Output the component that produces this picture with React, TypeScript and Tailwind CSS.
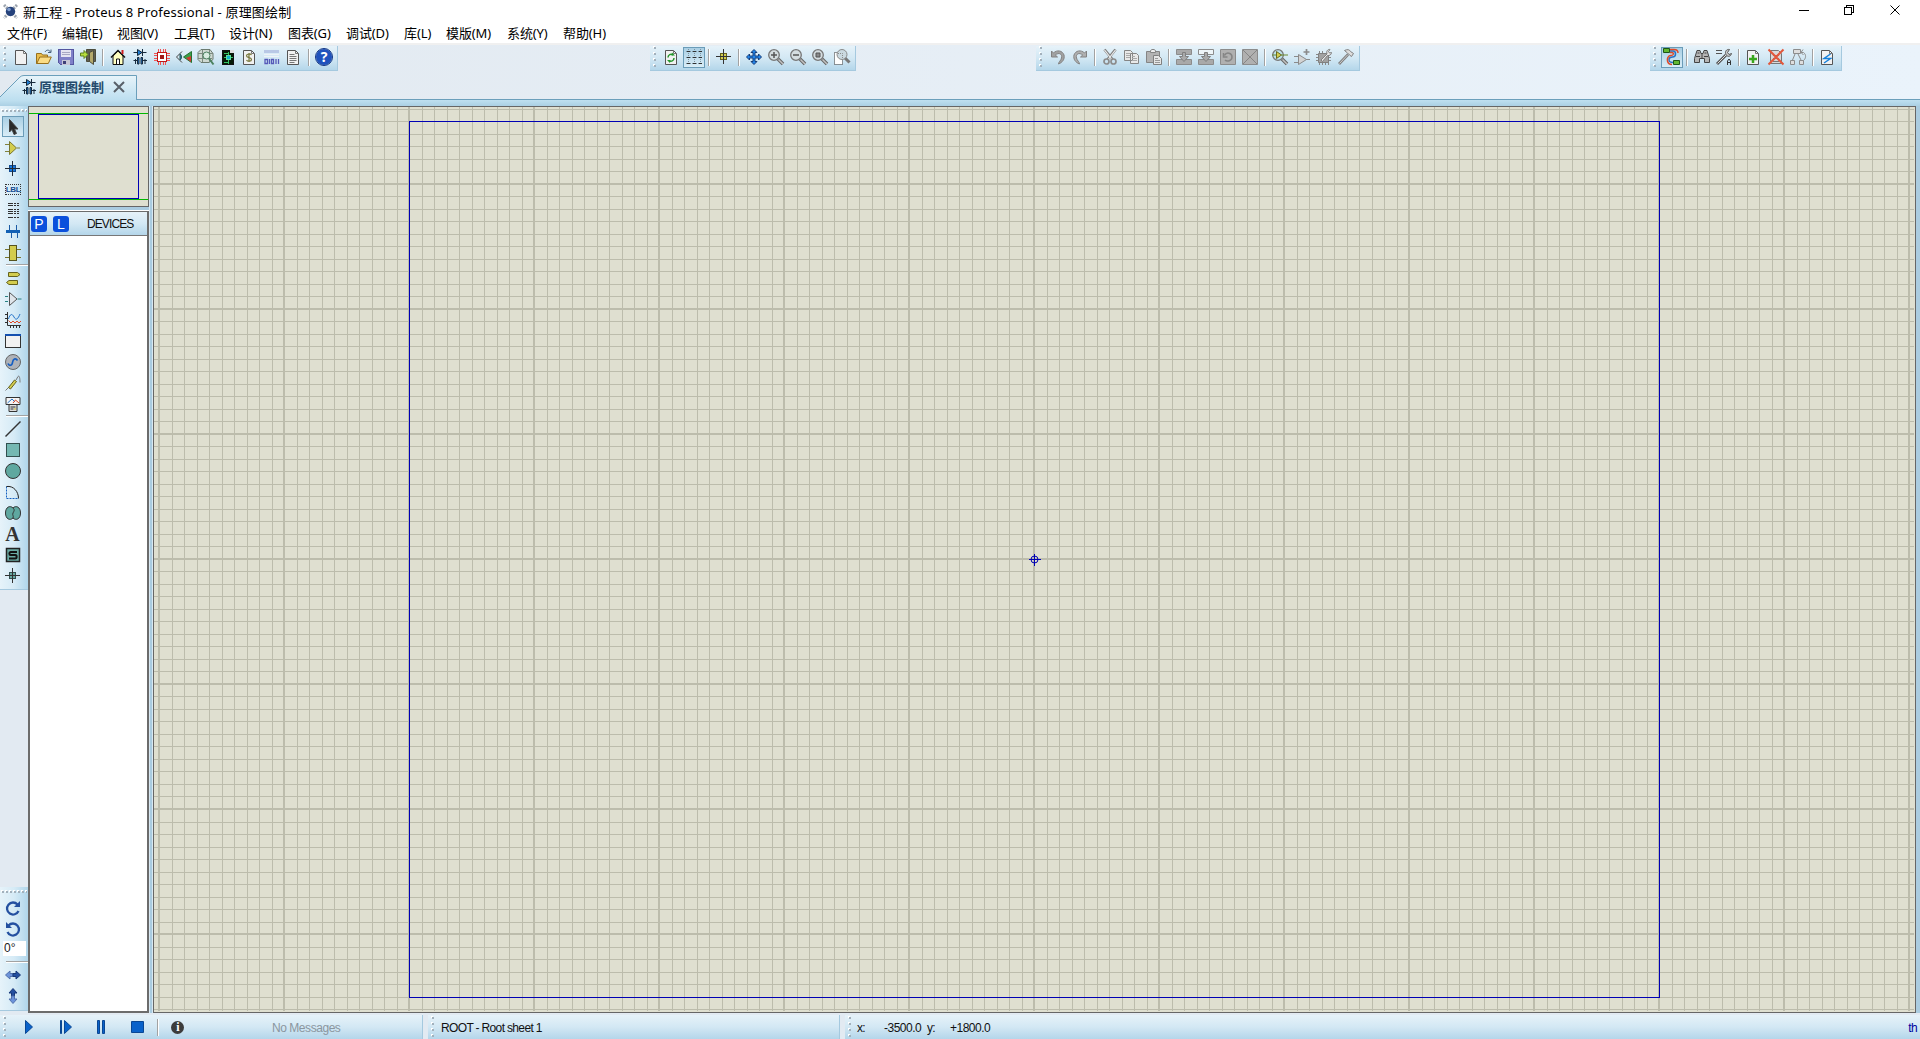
import type { ReactNode } from "react";

const INK = "#303030";
const GREY = "#8c8c8c";
const TEAL = "#5fa8a0";
const GOLD = "#d3cd4e";

function Svg({ children, crisp }: { children: ReactNode; crisp?: boolean }) {
  return (
    <svg
      className="block h-4 w-4 shrink-0 overflow-visible"
      viewBox="0 0 16 16"
      fill="none"
      stroke={INK}
      shapeRendering={crisp ? "crispEdges" : "auto"}
    >
      {children}
    </svg>
  );
}

// Blank page with a folded corner, base for all document icons
function Page({ children }: { children?: ReactNode }) {
  return (
    <Svg>
      <g transform="translate(-1 0)">
        <path d="M2.500 1.500H10.500l3 3V15.500h-11z" fill="#f1f1f1" stroke="#555" />
        <path d="M10.500 1.500v3h3" stroke="#777" />
        {children}
      </g>
    </Svg>
  );
}

function Lens({ children, glass = "#d5dde0" }: { children?: ReactNode; glass?: string }) {
  return (
    <Svg>
      <path d="M10 10l5 5" stroke="#666" strokeWidth="3.500" />
      <path d="M10.500 10.500l4.500 4.500" stroke="#c2c2c2" strokeWidth="1.500" />
      <circle cx="6" cy="6" r="5.300" fill={glass} stroke="#777" strokeWidth="1.300" />
      {children}
    </Svg>
  );
}

const fileIcons = {
  newDoc: <Page />,
  open: (
    <Svg>
      <path d="M.5 14.500v-10h5l1 1.500h5v8z" fill="#e9bd4d" stroke="#98701c" />
      <path d="M.8 14.500l3-6.500h11.500l-3 6.500z" fill="#fbdc84" stroke="#98701c" />
      <path d="M9 3c1.500-2.500 4-2.500 5.500 0M15 .500v3h-3" stroke="#46607c" />
    </Svg>
  ),
  save: (
    <Svg crisp>
      <path d="M.5 .5h15v15h-13l-2-2z" fill="#7f80c8" stroke="#5556a0" />
      <path d="M3 1h10v7H3z" fill="#e4e4f2" stroke="none" />
      <path d="M4 3.500h8M4 5.500h8" stroke="#a7a7c4" />
      <path d="M4 11h8v5H4z" fill="#c7c7d6" stroke="none" />
      <path d="M5 12h3v3H5z" fill="#3e3f78" stroke="none" />
    </Svg>
  ),
  exit: (
    <Svg>
      <path d="M6.500 .5h9v12h-9z" fill="#5f5f50" stroke="#4d4d3c" />
      <path d="M9.500 3.500l4-2v14l-4-3z" fill="#b4a96c" stroke="#4d4d3c" />
      <path d="M.5 4h3.500V1.500L8 5.500 4 9.500V7H.5z" fill="#b7dd3c" stroke="#5c8020" />
    </Svg>
  ),
};

const moduleIcons = {
  home: (
    <Svg>
      <path d="M3 7l5-5 5 5v8.500H3z" fill="#ffffc0" stroke="#111" />
      <path d="M1 8.500l7-7 7 7" stroke="#111" strokeWidth="1.500" />
      <path d="M12.500 1v4" stroke="#d02020" strokeWidth="2" />
      <path d="M6.500 15v-5h3v5" fill="#fff" stroke="#111" />
    </Svg>
  ),
  schematic: (
    <Svg>
      <path d="M1.500 3.500h13M1.500 11.500h4M10.500 11.500h4.500" stroke="#16293b" />
      <path d="M5.500 .5l4.500 3-4.500 3z" fill="#2080d8" stroke="#16293b" />
      <path d="M10.500 0v7M3.500 10v5M13 10v5" stroke="#16293b" />
      <path d="M5.500 8.500h1.500v6.500H5.500zM9 8.500h1.500v6.500H9z" fill="#2080d8" stroke="#16293b" />
    </Svg>
  ),
  pcb: (
    <Svg crisp>
      <path d="M4.500 0v16M6.500 0v16M9.500 0v16M11.500 0v16M0 4.500h16M0 6.500h16M0 9.500h16M0 11.500h16" stroke="#ef5353" />
      <path d="M3.500 3.500h9v9h-9z" fill="#fff" stroke="#c01818" />
      <path d="M6 6h4v4H6z" fill="#a01818" stroke="none" />
    </Svg>
  ),
  viewer: (
    <Svg>
      <path d="M6 2.500L.5 8 6 13.500" stroke="#444" />
      <path d="M4 5c2 1 2 5 0 6z" fill="#2f87b5" stroke="#255" />
      <path d="M15.500 2.500v11L7.500 8z" fill="#39a04a" stroke="#257030" />
      <path d="M15 7v6l-5-4z" fill="#d13c33" stroke="none" />
    </Svg>
  ),
  gerber: (
    <Svg>
      <path d="M3 .5h9l3 4v6l-4 3H3l-3-3v-7z" fill="#cfd9d2" stroke="#6c7b70" />
      <path d="M0 4.500h15M0 9.500h14M4.500 1v12M11.500 1v12" stroke="#7c8b80" />
      <circle cx="8.500" cy="6.500" r="3.500" fill="#d9ece0" stroke="#4c8260" />
      <path d="M11 9.500l4.500 6" stroke="#4c8260" strokeWidth="2" />
    </Svg>
  ),
  design: (
    <Svg crisp>
      <path d="M2.500 1.500h8l3 3v11h-11z" fill="#061a06" stroke="#111" />
      <path d="M8.500 3v12M4 8.500h9M4 4.500h4M4 13.500h5" stroke="#35c565" />
      <path d="M6.500 6.500h4v4h-4z" fill="#14b4ca" stroke="#58e0a0" />
      <path d="M10 1h4v3h-4z" fill="#ddd" stroke="none" />
    </Svg>
  ),
  cost: (
    <Page>
      <path d="M10.500 6c-1-1.500-5-1.500-5 .8s5 1.500 5 3.700-4 2.200-5 .5M8 4v9" stroke="#78783c" strokeWidth="1.200" />
    </Page>
  ),
  binary: (
    <Svg>
      <path d="M0 1h15v3H0z" fill="#b9c8e6" stroke="none" />
      <path d="M0 5.500h15M0 7.500h15" stroke="#eef2f8" />
      <path d="M1 10.500h2.500v4H1zM5.500 10v5M7.500 10.500h2v4h-2zM12 10v5M14.500 10v5" stroke="#5559b8" strokeWidth="1.300" />
    </Svg>
  ),
  notes: (
    <Page>
      <path d="M4.500 5.500h5M4.500 7.500h7M4.500 9.500h7M4.500 11.500h7M4.500 13.500h5" stroke="#777" />
    </Page>
  ),
};

const help = (
  <span className="flex h-4 w-4 items-center justify-center rounded-full bg-[#1f52bd] text-[14px] leading-none font-bold text-white outline-1 outline-[#0d3182]">
    ?
  </span>
);

const viewIcons = {
  refresh: (
    <Page>
      <path d="M5 8.500c0-3 3-4 5-2.500M11 9c0 3-3 4-5 2.500" stroke="#24962c" strokeWidth="1.500" />
      <path d="M9 3.500l3 3H8.500zM7 14L4 11h3.500z" fill="#24962c" stroke="none" />
    </Page>
  ),
  grid: (
    <Svg crisp>
      <path d="M0 2.500h16M0 8.500h16M0 14.500h16M2.500 0v16M8.500 0v16M14.500 0v16" strokeDasharray="1 1" stroke="#7d93a0" />
      <path d="M1 2.500h3M7 2.500h3M13 2.500h3M1 8.500h3M7 8.500h3M13 8.500h3M1 14.500h3M7 14.500h3M13 14.500h3" />
    </Svg>
  ),
  origin: (
    <Svg crisp>
      <path d="M4.500 4.500h6v6h-6z" fill={GOLD} stroke="#65621c" />
      <path d="M7.500 0v15M0 7.500h15" stroke="#333" />
    </Svg>
  ),
  pan: (
    <Svg>
      <path d="M8 .5L11 3.500H9v3.500h3.500V5l3 3-3 3V9H9v3.500h2L8 15.500 5 12.500h2V9H3.500v2L.5 8l3-3v2H7V3.500H5z" fill="#2286ec" stroke="#173d78" />
    </Svg>
  ),
  zoomIn: (
    <Lens>
      <path d="M3 6h6M6 3v6" strokeWidth="1.500" stroke="#555" />
    </Lens>
  ),
  zoomOut: (
    <Lens>
      <path d="M3 6h6" strokeWidth="1.500" stroke="#555" />
    </Lens>
  ),
  zoomAll: (
    <Lens>
      <path d="M4 4h4v4H4z" fill="#888" stroke="#555" />
    </Lens>
  ),
  zoomArea: (
    <Svg>
      <path d="M.5 3.500h8v12h-8z" fill="#fff" strokeDasharray="1 1" />
      <path d="M11 9l4.500 4.500" stroke="#777" strokeWidth="3" />
      <circle cx="8" cy="5.500" r="5" fill="#cad9e0" stroke="#8a8a8a" />
      <path d="M4 4.500h4.500v5" strokeDasharray="1 1" stroke="#8a8a8a" />
    </Svg>
  ),
};

const undoPath = "M1.500 2v6h6L5.300 6C9 3 12.500 5 11.500 9c-.5 2.500-3 4-3 6 4-1.500 6.500-5 5.500-9C12.500 1.500 7 .5 3.500 4z";

function Block({ top }: { top?: string }) {
  return (
    <Svg>
      <path d="M.5 .5h15v5H.5z" fill={top ?? "#a9a9a9"} stroke={GREY} />
      <path d="M.5 10.500h15v5H.5z" fill="#a9a9a9" stroke={GREY} />
      <path d="M6.500 3.500h3v4h3L8 12.500 3.500 7.500h3z" fill="#aaa" stroke="#808080" />
    </Svg>
  );
}

const editIcons = {
  undo: (
    <Svg>
      <path d={undoPath} fill="#a2a2a2" stroke="#828282" />
    </Svg>
  ),
  redo: (
    <Svg>
      <path d={undoPath} fill="#b0b0b0" stroke="#828282" transform="matrix(-1 0 0 1 16 0)" />
    </Svg>
  ),
  cut: (
    <Svg>
      <path d="M2.500 .5l8 10M13.500 .5l-8 10" stroke="#808080" strokeWidth="2.800" />
      <path d="M2.500 1l7 9M13.500 1l-7 9" stroke="#ececec" strokeWidth="1.200" />
      <circle cx="4.500" cy="12.500" r="2.500" stroke={GREY} strokeWidth="1.700" />
      <circle cx="11.500" cy="12.500" r="2.500" stroke={GREY} strokeWidth="1.700" />
    </Svg>
  ),
  copy: (
    <Svg>
      <path d="M.5 1.500h6l2 2v8h-8zM6.500 4.500h6l2 2v8h-8z" fill="#e9e9e9" stroke="#858585" />
      <path d="M2 4.500h4M2 6.500h4M2 8.500h4M8 7.500h3M8 9.500h5M8 11.500h5" stroke="#aaa" />
    </Svg>
  ),
  paste: (
    <Svg>
      <path d="M.5 2.500h13v11H.5z" fill="#b3b3b3" stroke="#858585" />
      <path d="M4.500 3.500v-2l1.500-1h2l1.500 1v2z" fill="#eee" stroke="#858585" />
      <path d="M7.500 6.500h5l3 3v6h-8z" fill="#e6e6e6" stroke="#808080" />
      <path d="M9 9.500h3M9 11.500h5M9 13.500h5" stroke="#999" />
    </Svg>
  ),
  blockCopy: <Block />,
  blockMove: <Block top="#eef5f8" />,
  blockRotate: (
    <Svg>
      <path d="M.5 .5h15v15H.5z" fill="#b0b0b0" stroke={GREY} />
      <path d="M4.500 6.500c2-4 7.500-2.500 7.500 1.500s-5 5-7 3M3.500 4v4h4" stroke="#858585" strokeWidth="1.500" />
    </Svg>
  ),
  blockDelete: (
    <Svg>
      <path d="M.5 .5h15v15H.5z" fill="#b0b0b0" stroke={GREY} />
      <path d="M1 1l14 14M15 1L1 15" stroke="#858585" />
    </Svg>
  ),
  pick: (
    <Lens glass="#bfe2ec">
      <path d="M4.500 2.500l5 3.500-5 3.500z" fill={GOLD} stroke="#6b6a20" />
      <path d="M0 6h4M9 6h7" stroke="#6b8a30" />
    </Lens>
  ),
  make: (
    <Svg>
      <path d="M4.500 5.500l8 5-8 5zM0 7.500h4M0 13.500h4M12 10.500h4" fill="#d3d3d3" stroke="#8b8b8b" />
      <path d="M12.500 0v6M9.500 3h6" stroke="#8b8b8b" strokeWidth="1.700" />
    </Svg>
  ),
  packaging: (
    <Svg>
      <path d="M3.500 2v14M6.500 2v14M9.500 4v12M12.500 4v12M0 5.500h14M0 8.500h15M0 11.500h15" stroke="#888" />
      <path d="M2.500 4.500h10v9h-10z" fill="#a2a2a2" stroke="#808080" />
      <path d="M5 11l6-6c-1-3 1-5 3-4.500l-1.500 2 1 1.500 2-.5c0 2-2 3.500-4 3l-5 6z" fill="#e9e9e9" stroke="#808080" />
    </Svg>
  ),
  decompose: (
    <Svg>
      <path d="M10 5.500L1 15" stroke="#808080" strokeWidth="2.700" />
      <path d="M9.500 6L1.500 14.500" stroke="#ccc" />
      <path d="M6.500 1.500c3-1.500 5-1 6 1l3 2-2 3-2-1.500-2-2z" fill="#ddd" stroke="#808080" />
    </Svg>
  ),
};

const toolIcons = {
  autoRoute: (
    <Svg>
      <path d="M6 2h3c2 0 2.500 1 2.500 3s-1 3-3 3-3.500 0-3.500 2.500S6 13.500 9 13.500" stroke="#2973c6" strokeWidth="1.500" />
      <path d="M6 .5h4c3 0 4 1 4 3.500M6 3.500h2c2 0 2 3-1 3s-4 3-3.500 5.500S5 15.500 8 15.500" stroke="#e04a2a" strokeWidth="1.500" />
      <path d="M-.5 -.500h6v4h-6zM9.500 11.500h6v4h-6z" fill="#62b832" stroke="#1e5618" />
    </Svg>
  ),
  find: (
    <Svg>
      <path d="M3 1.500h3l1 3h2l1-3h3l2.500 8v4h-5v-4h-5v4h-5v-4z" fill="#b5b5b5" stroke="#444" />
      <path d="M2 7.500h4M10 7.500h4M3.500 4h2M10.500 4h2M8 5v4" stroke="#444" />
    </Svg>
  ),
  property: (
    <Svg>
      <path d="M0 1.500h6M0 4.500h6" stroke="#555" />
      <path d="M1 15L10 6" stroke="#555" strokeWidth="3" />
      <path d="M1.500 14.500L10 6" stroke="#ddd" />
      <path d="M13.500 .5c-3-.5-5 2-3.500 5s5 2 5.500-1l-2.500 1-1.500-2z" fill="#ccc" stroke="#555" />
      <path d="M11.500 16v-4l1.500-2 1.500 2v4M11.500 13.500h3" stroke="#333" />
    </Svg>
  ),
  addSheet: (
    <Page>
      <path d="M8 6v8M4 10h8" stroke="#39a71d" strokeWidth="2.500" />
    </Page>
  ),
  removeSheet: (
    <Svg>
      <path d="M2.500 1.500h8l3 3v10h-11z" fill="#d9d9d9" stroke="#777" />
      <path d="M5 6.500h6M5 9.500h6M5 12.500h6" stroke="#777" />
      <path d="M.5 .500l15 15M15.500 .500l-15 15" stroke="#e2573b" strokeWidth="2" />
    </Svg>
  ),
  parentSheet: (
    <Svg>
      <path d="M3.500 .5h7v4h-7zM.5 11.500h4v4h-4zM9.500 11.500h4v4h-4z" fill="#dedede" stroke={GREY} />
      <path d="M5 5l-2.500 6M8 5l3 6M11 3.500h2.500c3 2 2.500 6 0 8M13 .5l-2 3L13.500 6" stroke={GREY} />
    </Svg>
  ),
  erc: (
    <Page>
      <path d="M11.500 5L5 9.500h6.500L5 14" stroke="#1681db" strokeWidth="1.500" />
    </Page>
  ),
};

const modeIcons: ReactNode[][] = [
  [
    <Svg key="select">
      <path d="M4.500 .5v12.500l2.500-2.500 2 5 2.500-1-2-4.500h3.500z" fill="#2a2a2a" stroke="#444" />
    </Svg>,
    <Svg key="component">
      <path d="M0 4.500h5M0 11.500h5M12 8h3" stroke="#83813d" />
      <path d="M4.500 1.500L11.500 8l-7 6.500z" fill={GOLD} stroke="#7a772d" />
    </Svg>,
    <Svg key="junction" crisp>
      <path d="M4.500 4.500h6v6h-6z" fill="#1878dc" stroke="#124a90" />
      <path d="M7.500 0v15M0 7.500h15" stroke="#222b36" />
    </Svg>,
    <div key="label" className="flex h-[11px] w-4 items-center justify-center border border-dotted border-[#333] font-['Liberation_Sans',sans-serif] text-[8px] leading-none font-bold tracking-[-0.3px] text-[#124a90]">
      LBL
    </div>,
    <Svg key="script" crisp>
      <path d="M3 .5h11M3 2.500h11M3 6.500h11M3 8.500h11M3 10.500h11M3 14.500h11" strokeDasharray="5 1 2 1" />
    </Svg>,
    <Svg key="bus" crisp>
      <path d="M4.500 1v6M11.500 1v6M6.500 8v6M12.500 8v6" stroke="#1b5ba5" />
      <path d="M1 6h14v3H1z" fill="#1260b4" stroke="none" />
    </Svg>,
    <Svg key="subcircuit" crisp>
      <path d="M0 4.500h5M11 4.500h5M0 12.500h5M11 12.500h5" stroke="#78752c" />
      <path d="M4.500 .5h7v15h-7z" fill={GOLD} stroke="#55531f" />
    </Svg>,
  ],
  [
    <Svg key="terminal">
      <path d="M3.500 2.500h9l2.500 2-2.500 2h-9zM12.500 10.500h-8.500l-2.500 2 2.500 2h8.500z" fill={GOLD} stroke="#65621c" />
    </Svg>,
    <Svg key="pin">
      <path d="M0 5.500h3M0 10.500h3M12.500 8h4" stroke="#288080" />
      <path d="M4.500 1.500l7.500 6.500-7.500 6.500z" fill="#dfe5ea" stroke="#555" />
    </Svg>,
    <Svg key="graph">
      <path d="M2.500 0v13.500H16M0 2.500h2M0 6.500h2M0 10.500h2M5.500 13v3M8.500 13v3M11.500 13v3M14.500 13v3" />
      <path d="M3.500 7C5 2 7 1 9 5s4 2 6-3" stroke="#2473c9" />
      <path d="M3.500 8.500L6 11l2-2 2 2 2-2 2 2 2-2" stroke="#dc4927" />
    </Svg>,
    <Svg key="popup" crisp>
      <path d="M.5 1.500h15v13H.5z" fill="#f1f1f1" stroke="#333" />
      <path d="M0 1h16v2H0z" fill="#1450b0" stroke="none" />
    </Svg>,
    <Svg key="generator">
      <circle cx="8" cy="8" r="7.500" fill="#aeb2b8" stroke="#666" />
      <path d="M3 9.500c1 2.500 4 2.500 4.500-1s3-5 5-2" stroke="#155ec2" strokeWidth="1.700" />
    </Svg>,
    <Svg key="probe">
      <path d="M.5 15.500l4-4M11 5l2-3.500c1-1 2 0 2 6" stroke="#777" />
      <path d="M3.500 12.500L9.500 5l2 1.500-6 7.500z" fill={GOLD} stroke="#65621c" />
    </Svg>,
    <Svg key="instrument">
      <path d="M1 1.500h14v7H1z" fill="#f4f4f4" stroke="#333" />
      <path d="M2.500 7L7 3l3 3" stroke="#2374c9" />
      <path d="M8 7l2.500-3L14 7" stroke="#d84825" />
      <path d="M4 8.500h8v7H4z" fill="#ddd" stroke="#333" />
      <path d="M5.500 11h5M5.500 13h3" />
      <path d="M9 13h2" stroke="#c9b91f" />
    </Svg>,
  ],
  [
    <Svg key="line">
      <path d="M.5 15.500l15-15" stroke="#333" strokeWidth="1.500" />
    </Svg>,
    <Svg key="box" crisp>
      <path d="M1.500 1.500h13v13h-13z" fill="#74b8b2" stroke="#33504f" />
    </Svg>,
    <Svg key="circle">
      <circle cx="8" cy="8" r="7.500" fill={TEAL} stroke="#333" />
    </Svg>,
    <Svg key="arc">
      <path d="M1.500 2.500v12h12" stroke="#1560c0" strokeDasharray="2 1" />
      <path d="M1.500 2.500c7-1 12 5 12 12" stroke="#222" />
    </Svg>,
    <Svg key="path">
      <path d="M8 3C5 0 .5 2 .5 8s4.500 8 7.500 5c3 3 7.500 1 7.500-5S11 0 8 3z" fill={TEAL} stroke="#333" />
      <path d="M8 3c2 2 1 3 0 5s1 3 0 5" stroke="#333" />
    </Svg>,
    <span key="text" className="mr-px font-['Liberation_Serif',serif] text-[20px] leading-none font-bold text-[#333]">
      A
    </span>,
    <Svg key="symbol">
      <path d="M1.500 1.500h13v13h-13z" fill="#69aaa3" stroke="#222" strokeWidth="1.500" />
      <path d="M12 5H5.500C4 5 4 8 5.500 8h5c1.500 0 1.500 3.500 0 3.500H4" stroke="#111" strokeWidth="2" />
    </Svg>,
    <Svg key="marker" crisp>
      <path d="M4.500 4.500h6v6h-6z" fill="#69aaa3" stroke="#33504f" />
      <path d="M7.500 0v15M0 7.500h15" stroke="#333" />
    </Svg>,
  ],
];

const bar = "bg-linear-to-b from-[#e6f2f9] via-[#d3e8f4] to-[#b4d6ea]";
const sideBar = "bg-linear-to-r from-[#e6f3fa] via-[#d6ebf6] to-[#b0d6eb]";

function Grip({ className = "" }: { className?: string }) {
  return (
    <svg className={`block h-[25px] w-[11px] shrink-0 ${className}`} shapeRendering="crispEdges">
      <path d="M4 1v24" stroke="#fff" strokeWidth="2" strokeDasharray="2 4" />
      <path d="M5 2v23" stroke="#a3b1bc" strokeWidth="2" strokeDasharray="2 4" />
    </svg>
  );
}

function HGrip() {
  return (
    <svg className="block h-3 w-7 shrink-0" shapeRendering="crispEdges">
      <path d="M1 4h26" stroke="#fff" strokeWidth="2" strokeDasharray="2 2" />
      <path d="M2 5h25" stroke="#a3b1bc" strokeWidth="2" strokeDasharray="2 2" />
    </svg>
  );
}

function Sep() {
  return (
    <div className="flex h-[17px] w-2 shrink-0 justify-center">
      <div className="w-px bg-[#a2a2a2]" />
      <div className="w-px bg-white" />
    </div>
  );
}

function HSep() {
  return (
    <div className="flex h-1 w-[22px] shrink-0 flex-col justify-center self-end">
      <div className="h-px bg-[#a2a2a2]" />
      <div className="h-px bg-white" />
    </div>
  );
}

function ToolButton({ icon, active }: { icon: ReactNode; active?: boolean }) {
  return (
    <button
      className={`flex h-[21px] w-[22px] shrink-0 items-center justify-center border ${
        active
          ? "border-[#6b9cb8] bg-linear-to-b from-[#a9cfe4] to-[#d9edf7]"
          : "border-transparent"
      }`}
    >
      {icon}
    </button>
  );
}

function Toolbar({ groups, active, className }: { groups: ReactNode[][]; active?: string; className: string }) {
  return (
    <div className={`flex h-[25px] shrink-0 items-center border-r border-b border-[#a5c9df] pb-[2px] ${bar} ${className}`}>
      <Grip className="mt-px" />
      {groups.map((group, g) => (
        <div key={g} className="flex items-center">
          {g > 0 && <Sep />}
          {group.map((icon, i) => (
            <ToolButton key={i} icon={icon} active={active === `${g}-${i}`} />
          ))}
        </div>
      ))}
    </div>
  );
}

const MENUS = [
  { label: "文件(F)", width: "w-[55px]" },
  { label: "编辑(E)", width: "w-[55px]" },
  { label: "视图(V)", width: "w-[57px]" },
  { label: "工具(T)", width: "w-[55px]" },
  { label: "设计(N)", width: "w-[59px]" },
  { label: "图表(G)", width: "w-[58px]" },
  { label: "调试(D)", width: "w-[58px]" },
  { label: "库(L)", width: "w-[42px]" },
  { label: "模版(M)", width: "w-[61px]" },
  { label: "系统(Y)", width: "w-[56px]" },
  { label: "帮助(H)", width: "w-[60px]" },
];

function TitleBar() {
  return (
    <div className="flex h-[22px] shrink-0 items-center bg-white pl-[3px]">
      <svg className="h-[15px] w-[15px]" viewBox="0 0 15 15">
        <path d="M1 1l13 13M14 1L1 14" stroke="#9ca4ae" strokeWidth="3" strokeDasharray="2 1" />
        <circle cx="7.500" cy="7.500" r="4.700" fill="#25427c" />
        <circle cx="6" cy="5.500" r="1.800" fill="#7d9cce" />
      </svg>
      <span className="mt-0.5 ml-[5px] text-[13px] leading-5 tracking-[0.17px] whitespace-pre">
        新工程 - Proteus 8 Professional - 原理图绘制
      </span>
      <svg className="mr-[19px] ml-auto h-[12px] w-[102px]" fill="none" stroke="#000">
        <path d="M0 5.500h10" shapeRendering="crispEdges" />
        <path d="M45.500 2.500h7v7h-7zM47.500 2.500v-2h7v7h-2" shapeRendering="crispEdges" />
        <path d="M91.500 .5l9 9M100.500 .5l-9 9" />
      </svg>
    </div>
  );
}

function TabBar() {
  return (
    <div className="relative h-7 shrink-0">
      <div className="absolute inset-x-0 bottom-0 h-px bg-[#6b9fbb]" />
      <svg className="absolute top-0 left-0 h-7 w-[138px]">
        <defs>
          <linearGradient id="tab" x1="0" y1="0" x2="0" y2="1">
            <stop offset="0" stopColor="#e8f4fa" />
            <stop offset="1" stopColor="#bddff0" />
          </linearGradient>
        </defs>
        <path d="M0 28V25L20 5Q21.500 3.500 24 3.500H136.500V28" fill="url(#tab)" />
        <path d="M0 25L20 5Q21.500 3.500 24 3.500H136.500V28" fill="none" stroke="#6b9fbb" />
      </svg>
      <div className="absolute top-[3px] left-0 flex h-6 items-center pl-[21px]">
        <div className="h-4 w-4">{moduleIcons.schematic}</div>
        <span className="ml-[2px] text-[13px] leading-none font-semibold text-[#244a6c]">原理图绘制</span>
        <svg className="ml-[9px] h-3 w-3" stroke="#596069" strokeWidth="2">
          <path d="M1 1l10 10M11 1L1 11" />
        </svg>
      </div>
    </div>
  );
}

function ModeBar() {
  return (
    <div className="flex w-7 shrink-0 flex-col bg-[#e2eaf2]">
      <div className={`flex flex-col border-b border-[#a5c9df] pb-[3px] pl-[2px] ${sideBar}`}>
        <div className="-ml-[2px] h-[10px]">
          <HGrip />
        </div>
        {modeIcons.map((group, g) => (
          <div key={g} className="flex flex-col">
            {g > 0 && <HSep />}
            {group.map((icon, i) => (
              <ToolButton key={i} icon={icon} active={g === 0 && i === 0} />
            ))}
          </div>
        ))}
      </div>
      <div className={`mt-auto mb-[2px] flex h-[124px] flex-col border-b border-[#a5c9df] pl-[2px] ${sideBar}`}>
        <div className="-ml-[2px] h-[10px]">
          <HGrip />
        </div>
        <ToolButton
          icon={
            <Svg>
              <path d="M12.500 4.500A6 6 0 1 0 13.500 11" stroke="#2450a0" strokeWidth="2.300" />
              <path d="M15 1v6H9z" fill="#2450a0" stroke="none" />
            </Svg>
          }
        />
        <ToolButton
          icon={
            <Svg>
              <path d="M3.500 4.500A6 6 0 1 1 2.500 11" stroke="#2450a0" strokeWidth="2.300" />
              <path d="M1 1v6h6z" fill="#2450a0" stroke="none" />
            </Svg>
          }
        />
        <div className="mt-[2px] ml-px h-[15px] w-[23px] bg-white pl-px font-['Liberation_Sans',sans-serif] text-[12px] leading-[14px] text-[#222]">0°</div>
        <div className="mt-1 flex flex-col">
          <HSep />
        </div>
        <ToolButton
          icon={
            <Svg>
              <path d="M.5 8L5 4v2.500h3v3H5V12z" fill="#6c93da" stroke="#5272ae" />
              <path d="M15.500 8L11 4v2.500H8v3h3V12z" fill="#2450a0" stroke="#183878" />
            </Svg>
          }
        />
        <ToolButton
          icon={
            <Svg>
              <path d="M8 .5L4 5h2.500v3h3V5H12z" fill="#2450a0" stroke="#183878" />
              <path d="M8 15.500L4 11h2.500V8h3v3H12z" fill="#6c93da" stroke="#5272ae" />
            </Svg>
          }
        />
      </div>
    </div>
  );
}

function Badge({ letter }: { letter: string }) {
  return (
    <span className="flex h-4 w-4 items-center justify-center rounded-[3px] bg-[#0b50dc] font-['Liberation_Sans',sans-serif] text-[14px] leading-none text-white">
      {letter}
    </span>
  );
}

function SidePanel() {
  return (
    <div className="flex w-[121px] shrink-0 flex-col">
      <div className="h-[101px] shrink-0 border border-[#666] bg-[#dfdfd0]">
        <svg className="block h-[99px] w-[119px]" fill="none" shapeRendering="crispEdges">
          <path d="M0 6.500h119M0 92.500h119" stroke="#00b800" />
          <path d="M9.500 7.500h100v84h-100z" stroke="#0000b4" />
        </svg>
      </div>
      <div className="h-1 shrink-0 border-b border-white bg-[#a9cbe0]" />
      <div className="flex min-h-0 flex-1 flex-col border-2 border-t border-[#6c6c6c] bg-white">
        <div className={`flex h-6 shrink-0 items-center gap-[6px] border-b border-[#777] pl-px ${bar}`}>
          <Badge letter="P" />
          <Badge letter="L" />
          <span className="ml-[12px] font-['Liberation_Sans',sans-serif] text-[12px] tracking-[-0.9px] text-[#111]">DEVICES</span>
        </div>
      </div>
    </div>
  );
}

const PITCH = 12.5;
const CANVAS = { width: 1761, height: 905 };

// Grid ticks every 12.5px, heavier line every tenth one
function gridPaths(origin: number, size: number, step: number, toPath: (at: number) => string) {
  let minor = "";
  let major = "";
  for (let k = -10; origin + k * step < size; k++) {
    const at = Math.floor(origin + k * step);
    if (at < 0) continue;
    minor += toPath(at + 0.5);
    if (k % 10 === 0) major += toPath(at - 0.5);
  }
  return minor + major;
}

function Sheet() {
  const vertical = gridPaths(5.7, CANVAS.width, PITCH, (x) => `M${x} 0V${CANVAS.height - 1}`);
  const horizontal = gridPaths(77.4, CANVAS.height, PITCH + 0.002, (y) => `M0 ${y}H${CANVAS.width - 1}`);
  return (
    <div className="w-[1763px] shrink-0 border border-[#666] bg-[#dfdfd0]">
      <svg className="block h-[905px] w-[1761px]" fill="none" shapeRendering="crispEdges">
        <path d={vertical + horizontal} stroke="#bcbcac" />
        <path d="M255.500 14.500h1250v876h-1250z" stroke="#0000b4" />
        <g stroke="#0000b4" shapeRendering="auto">
          <circle cx="880.500" cy="452.500" r="3.500" />
          <path d="M874.500 452.500h12M880.500 446.500v12" shapeRendering="crispEdges" />
        </g>
      </svg>
    </div>
  );
}

function StatusBar() {
  return (
    <div className="flex h-6 shrink-0 gap-[5px] bg-[#e2eaf2] font-['Liberation_Sans',sans-serif] text-[12px] tracking-[-0.65px]">
      <div className={`flex w-[423px] items-center border-r border-[#a5c9df] ${bar}`}>
        <Grip />
        <svg className="h-4 w-[140px]" fill="#0a62ca" stroke="#0a4794">
          <path d="M14.500 1.500l7 6.500-7 6.500zM49.500 1.500h1v13h-1zM53.500 1.500l7 6.500-7 6.500zM86.500 1.500h2v13h-2zM91.500 1.500h2v13h-2zM120.500 2.500h12v11h-12z" />
        </svg>
        <div className="ml-[3px]">
          <Sep />
        </div>
        <span className="ml-[9px] flex h-[13px] w-[13px] items-center justify-center rounded-full bg-[#3c3c3c] font-['Liberation_Serif',serif] text-[12px] leading-none font-bold text-white">
          i
        </span>
        <span className="mt-0.5 ml-[88px] tracking-[-0.45px] text-[#8a969f]">No Messages</span>
      </div>
      <div className={`flex w-[412px] items-center border-r border-[#a5c9df] ${bar}`}>
        <Grip />
        <span className="mt-0.5 ml-[2px] text-[#111]">ROOT - Root sheet 1</span>
      </div>
      <div className={`flex flex-1 items-center text-[#111] ${bar}`}>
        <Grip />
        <span className="mt-0.5 ml-px w-[27px]">x:</span>
        <span className="mt-0.5 w-[43px] tracking-[-0.5px]">-3500.0</span>
        <span className="mt-0.5 w-[23px]">y:</span>
        <span className="mt-0.5 tracking-[-0.5px]">+1800.0</span>
        <span className="mt-0.5 ml-auto pr-[3px] text-[#0000a0]">th</span>
      </div>
    </div>
  );
}

export default function App() {
  return (
    <div className="flex h-[1039px] w-[1920px] flex-col overflow-hidden bg-[#abcce0] font-['Noto_Sans','Noto_Sans_CJK_SC',sans-serif] text-black">
      <TitleBar />
      <div className="flex h-[21px] shrink-0 items-center bg-white pt-0.5 pl-[7px] text-[13px] leading-none tracking-[-0.1px]">
        {MENUS.map((menu) => (
          <span key={menu.label} className={`shrink-0 whitespace-nowrap ${menu.width}`}>
            {menu.label}
          </span>
        ))}
      </div>
      <div className="flex h-[57px] shrink-0 flex-col bg-linear-to-r from-[#e2e9f0] to-[#eaf3fb]">
        <div className="flex h-[29px] shrink-0 border-t-2 border-[#f0f0f0] pt-px">
          <Toolbar
            className="w-[338px]"
            groups={[Object.values(fileIcons), Object.values(moduleIcons), [help]]}
          />
          <Toolbar
            className="ml-[312px] w-[206px]"
            active="0-1"
            groups={[
              [viewIcons.refresh, viewIcons.grid],
              [viewIcons.origin],
              [viewIcons.pan, viewIcons.zoomIn, viewIcons.zoomOut, viewIcons.zoomAll, viewIcons.zoomArea],
            ]}
          />
          <Toolbar
            className="ml-[180px] w-[324px]"
            groups={[
              [editIcons.undo, editIcons.redo],
              [editIcons.cut, editIcons.copy, editIcons.paste],
              [editIcons.blockCopy, editIcons.blockMove, editIcons.blockRotate, editIcons.blockDelete],
              [editIcons.pick, editIcons.make, editIcons.packaging, editIcons.decompose],
            ]}
          />
          <Toolbar
            className="ml-[290px] w-[192px]"
            active="0-0"
            groups={[
              [toolIcons.autoRoute],
              [toolIcons.find, toolIcons.property],
              [toolIcons.addSheet, toolIcons.removeSheet, toolIcons.parentSheet],
              [toolIcons.erc],
            ]}
          />
        </div>
        <TabBar />
      </div>
      <div className="h-[6px] shrink-0 bg-linear-to-b from-[#bfe0f0] to-[#abd0e4]" />
      <div className="flex h-[907px] shrink-0">
        <ModeBar />
        <SidePanel />
        <div className="w-1 shrink-0 border-x border-[#d8e8f2] bg-[#a9cbe0]" />
        <Sheet />
      </div>
      <div className="h-[2px] shrink-0 bg-[#e2eaf2]" />
      <StatusBar />
    </div>
  );
}
